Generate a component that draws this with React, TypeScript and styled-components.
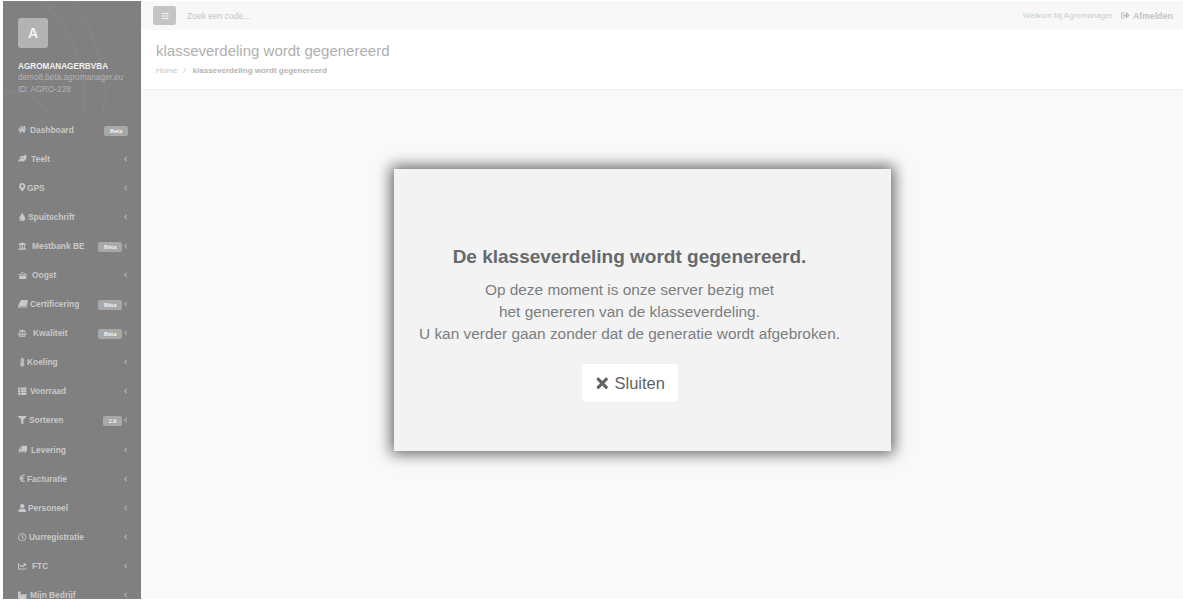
import React from "react";
import styled, { createGlobalStyle } from "styled-components";
import { IconType } from "react-icons";
import {
  FaAngleLeft,
  FaBalanceScale,
  FaBars,
  FaChartLine,
  FaEuroSign,
  FaFilter,
  FaHome,
  FaIndustry,
  FaLeaf,
  FaMapMarkerAlt,
  FaRegClock,
  FaSignOutAlt,
  FaThermometerFull,
  FaThList,
  FaTimes,
  FaTint,
  FaTruck,
  FaUniversity,
  FaUser,
} from "react-icons/fa";

const GlobalStyle = createGlobalStyle`
  html, body {
    margin: 0;
    height: 100%;
    overflow: hidden;
    background: #ffffff;
    font-family: "Liberation Sans", Arial, sans-serif;
  }
`;

const Page = styled.div`
  position: relative;
  width: 1183px;
  height: 603px;
  display: flex;
  overflow: hidden;
  background: #ffffff;
  padding: 1px 0 4px 3px;
  box-sizing: border-box;
`;

const Sidebar = styled.nav`
  width: 138px;
  flex-shrink: 0;
  background: #808080;
  display: flex;
  flex-direction: column;
  overflow: hidden;
`;

const Profile = styled.div`
  position: relative;
  height: 114px;
  flex-shrink: 0;
  padding: 17px 0 0 15px;
  box-sizing: border-box;
`;

const Curves = styled.svg`
  position: absolute;
  inset: 0;
`;

const Avatar = styled.div`
  position: relative;
  width: 30px;
  height: 30px;
  border-radius: 3px;
  background: #b3b3b3;
  color: #f4f4f4;
  font-size: 14px;
  font-weight: 700;
  display: flex;
  align-items: center;
  justify-content: center;
`;

const CompanyName = styled.div`
  position: relative;
  margin-top: 13px;
  font-size: 8.2px;
  line-height: 11px;
  font-weight: 700;
  color: #f0f0f0;
`;

const ProfileLine = styled.div`
  position: relative;
  font-size: 8.2px;
  line-height: 11.5px;
  color: #b4b4b4;
`;

const Menu = styled.ul`
  list-style: none;
  margin: 0;
  padding: 0;
`;

const MenuRow = styled.li`
  height: 29.1px;
  display: flex;
  align-items: center;
  padding: 0 12px 0 15px;
  color: #c8c8c8;
  font-size: 8.4px;
  font-weight: 700;
`;

const MenuIcon = styled.span<{ $width: number; $flip?: boolean }>`
  width: ${(props) => props.$width}px;
  flex-shrink: 0;
  display: flex;
  align-items: center;
  transform-origin: 4.5px center;
  transform: ${(props) => (props.$flip ? "scaleX(-1)" : "none")};

  svg {
    height: 8.5px;
    width: auto;
    max-width: 10px;
  }
`;

const MenuLabel = styled.span`
  flex: 1;
  white-space: nowrap;
`;

const Badge = styled.span<{ $flush?: boolean }>`
  height: 10px;
  margin-top: 2px;
  margin-right: ${(props) => (props.$flush ? "1px" : "0")};
  padding: 0 5.5px;
  border-radius: 2px;
  background: #a8a8a8;
  color: #f2f2f2;
  font-family: "Liberation Serif", serif;
  font-size: 6.5px;
  font-weight: 700;
  line-height: 10px;
`;

const Chevron = styled.span`
  width: 7px;
  display: flex;
  justify-content: flex-end;
  color: #a8a8a8;
  font-size: 8px;
`;

const Main = styled.main`
  flex: 1;
  display: flex;
  flex-direction: column;
  min-width: 0;
  background: #f9f9f9;
`;

const TopBar = styled.header`
  height: 29px;
  flex-shrink: 0;
  display: flex;
  align-items: center;
  padding: 0 10px 0 12px;
  background: #f8f8f8;
`;

const MenuButton = styled.div`
  width: 23px;
  height: 19px;
  border-radius: 2px;
  background: #c4c4c4;
  color: #f5f5f5;
  display: flex;
  align-items: center;
  justify-content: center;
  font-size: 8px;
`;

const SearchText = styled.span`
  margin-left: 11px;
  flex: 1;
  color: #c4c4c4;
  font-size: 8.5px;
`;

const Welcome = styled.span`
  color: #cccccc;
  font-size: 8px;
`;

const Logout = styled.span`
  margin-left: 7px;
  display: flex;
  align-items: center;
  gap: 3px;
  color: #c4c4c4;
  font-size: 8.8px;
  font-weight: 700;
`;

const TitleBar = styled.section`
  height: 60px;
  flex-shrink: 0;
  box-sizing: border-box;
  padding: 12px 0 0 15px;
  background: #ffffff;
  border-bottom: 1px solid #efefef;
`;

const PageTitle = styled.h2`
  margin: 0;
  color: #b0b0b0;
  font-size: 15px;
  line-height: 18px;
  font-weight: 400;
`;

const Crumbs = styled.div`
  margin-top: 5px;
  display: flex;
  color: #c4c4c4;
  font-size: 8px;
  line-height: 12px;
`;

const CrumbSeparator = styled.span`
  margin: 0 7px 0 6px;
`;

const CrumbCurrent = styled.strong`
  color: #b4b4b4;
`;

const Modal = styled.div`
  position: absolute;
  left: 394px;
  top: 169px;
  width: 497px;
  height: 282px;
  box-sizing: border-box;
  padding: 77px 26px 0 0;
  background: #f3f3f3;
  box-shadow: 0 0 14px 3px rgba(0, 0, 0, 0.6);
  display: flex;
  flex-direction: column;
  align-items: center;
  text-align: center;
`;

const ModalTitle = styled.h3`
  margin: 0;
  color: #676a6c;
  font-size: 19px;
  line-height: 22px;
  font-weight: 700;
  white-space: nowrap;
`;

const ModalText = styled.p`
  margin: 11px 0 0;
  color: #7b7e80;
  font-size: 15.4px;
  line-height: 22px;
  white-space: nowrap;
`;

const CloseButton = styled.button`
  margin-top: 18px;
  width: 98px;
  height: 40px;
  padding: 0;
  border: 1px solid #efefef;
  border-radius: 3px;
  background: #ffffff;
  color: #5f6264;
  font-family: inherit;
  font-size: 16.5px;
  display: flex;
  align-items: center;
  justify-content: center;
  gap: 4px;
`;

// FA4 style basket, the package only has the newer drawing
const BasketIcon: IconType = () => (
  <svg viewBox="0 0 20 18" fill="currentColor">
    <path d="M5 7 C5 1 15 1 15 7 L13.4 7 C13.4 3 6.6 3 6.6 7 Z" />
    <path d="M1 7 H19 V9 H1 Z" />
    <path d="M2 10 H18 L17 17 Q16.9 18 16 18 H4 Q3.1 18 3 17 Z" />
  </svg>
);

// slanted book of FA4
const SlantedBookIcon: IconType = () => (
  <svg viewBox="0 0 20 17" fill="currentColor">
    <path d="M6 0 H20 L16 13 H2 Q1 13.6 2 15 H16 L19.5 4 L20 5 L16.5 17 H2 Q-1 15 0.5 11 Z" />
  </svg>
);

interface IMenuItem {
  label: string;
  icon: IconType;
  iconWidth: number;
  badge?: string;
  noChevron?: boolean;
  flip?: boolean;
}

const menuItems: IMenuItem[] = [
  { label: "Dashboard", icon: FaHome, iconWidth: 12, badge: "Beta", noChevron: true },
  { label: "Teelt", icon: FaLeaf, iconWidth: 13 },
  { label: "GPS", icon: FaMapMarkerAlt, iconWidth: 9 },
  { label: "Spuitschrift", icon: FaTint, iconWidth: 10 },
  { label: "Mestbank BE", icon: FaUniversity, iconWidth: 14, badge: "Bèta" },
  { label: "Oogst", icon: BasketIcon, iconWidth: 14 },
  { label: "Certificering", icon: SlantedBookIcon, iconWidth: 12, badge: "Bèta" },
  { label: "Kwaliteit", icon: FaBalanceScale, iconWidth: 15, badge: "Bèta" },
  { label: "Koeling", icon: FaThermometerFull, iconWidth: 9 },
  { label: "Voorraad", icon: FaThList, iconWidth: 12 },
  { label: "Sorteren", icon: FaFilter, iconWidth: 11, badge: "2.0" },
  { label: "Levering", icon: FaTruck, iconWidth: 13, flip: true },
  { label: "Facturatie", icon: FaEuroSign, iconWidth: 9 },
  { label: "Personeel", icon: FaUser, iconWidth: 10 },
  { label: "Uurregistratie", icon: FaRegClock, iconWidth: 11 },
  { label: "FTC", icon: FaChartLine, iconWidth: 14 },
  { label: "Mijn Bedrijf", icon: FaIndustry, iconWidth: 12 },
];

function App() {
  return (
    <>
      <GlobalStyle />
      <Page>
        <Sidebar>
          <Profile>
            <Curves width="138" height="114" viewBox="0 0 138 114" fill="none" stroke="#838383" strokeWidth="3">
              <path d="M70 0 C95 35 105 75 100 114" />
              <path d="M40 0 C70 30 85 70 80 114" />
              <path d="M0 95 C18 85 35 95 45 114" />
            </Curves>
            <Avatar>A</Avatar>
            <CompanyName>AGROMANAGERBVBA</CompanyName>
            <ProfileLine>demo8.beta.agromanager.eu</ProfileLine>
            <ProfileLine>ID: AGRO-228</ProfileLine>
          </Profile>
          <Menu>
            {menuItems.map((item) => (
              <MenuRow key={item.label}>
                <MenuIcon $width={item.iconWidth} $flip={item.flip}>
                  <item.icon />
                </MenuIcon>
                <MenuLabel>{item.label}</MenuLabel>
                {item.badge && <Badge $flush={item.noChevron}>{item.badge}</Badge>}
                {!item.noChevron && (
                  <Chevron>
                    <FaAngleLeft />
                  </Chevron>
                )}
              </MenuRow>
            ))}
          </Menu>
        </Sidebar>
        <Main>
          <TopBar>
            <MenuButton>
              <FaBars />
            </MenuButton>
            <SearchText>Zoek een code...</SearchText>
            <Welcome>Welkom bij Agromanager.</Welcome>
            <Logout>
              <FaSignOutAlt />
              Afmelden
            </Logout>
          </TopBar>
          <TitleBar>
            <PageTitle>klasseverdeling wordt gegenereerd</PageTitle>
            <Crumbs>
              Home
              <CrumbSeparator>/</CrumbSeparator>
              <CrumbCurrent>klasseverdeling wordt gegenereerd</CrumbCurrent>
            </Crumbs>
          </TitleBar>
        </Main>
        <Modal>
          <ModalTitle>De klasseverdeling wordt gegenereerd.</ModalTitle>
          <ModalText>
            Op deze moment is onze server bezig met
            <br />
            het genereren van de klasseverdeling.
            <br />U kan verder gaan zonder dat de generatie wordt afgebroken.
          </ModalText>
          <CloseButton>
            <FaTimes />
            Sluiten
          </CloseButton>
        </Modal>
      </Page>
    </>
  );
}

export default App;
